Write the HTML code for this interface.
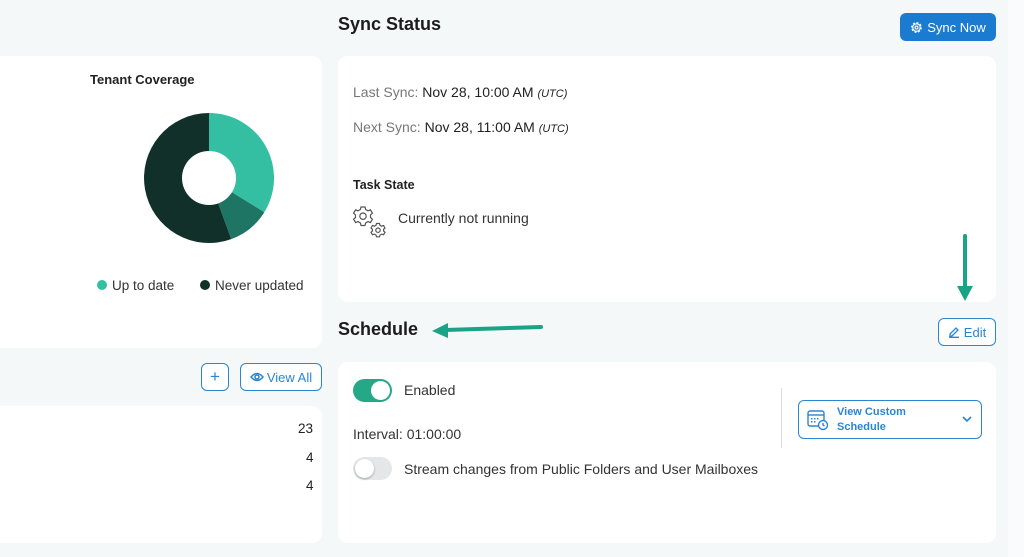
<!DOCTYPE html>
<html><head><meta charset="utf-8"><style>
*{box-sizing:border-box;margin:0;padding:0}
body{width:1024px;height:557px;overflow:hidden;background:#f4f8f9;font-family:"Liberation Sans",sans-serif;color:#222;position:relative}
.card{position:absolute;background:#fff;border-radius:10px}
.abs{position:absolute;white-space:nowrap}
.btn{position:absolute;border:1.5px solid #2a86d3;border-radius:6px;color:#2a86d3;font-size:13px;display:flex;align-items:center;justify-content:center;background:#fff}
.gray{color:#777}
</style></head><body>
<div class="abs" style="left:1008px;top:0;width:16px;height:557px;background:#f9fbfc"></div>
<div class="card" style="left:-10px;top:56px;width:332px;height:292px"></div>
<div class="abs" style="left:90px;top:72px;font-size:13px;font-weight:bold;color:#222">Tenant Coverage</div>
<svg class="abs" style="left:144px;top:113px" width="130" height="130" viewBox="-65 -65 130 130">
<path d="M0,-65 A65,65 0 0 1 55.3,34.2 L0,0Z" fill="#34bfa3"/>
<path d="M55.3,34.2 A65,65 0 0 1 22.2,61.1 L0,0Z" fill="#1e7563"/>
<path d="M22.2,61.1 A65,65 0 1 1 0,-65 L0,0Z" fill="#12302a"/>
<circle r="27" fill="#fff"/></svg>
<div class="abs" style="left:97px;top:278px;font-size:13.5px;color:#333"><span style="display:inline-block;width:10px;height:10px;border-radius:50%;background:#34bfa3;margin-right:5px"></span>Up to date</div>
<div class="abs" style="left:200px;top:278px;font-size:13.5px;color:#333"><span style="display:inline-block;width:10px;height:10px;border-radius:50%;background:#12302a;margin-right:5px"></span>Never updated</div>

<div class="btn" style="left:201px;top:363px;width:28px;height:28px;font-size:17px">+</div>
<div class="btn" style="left:240px;top:363px;width:82px;height:28px"><svg width="14" height="10" viewBox="0 0 14 10" style="margin-right:3px"><path d="M1,5 Q7,-2 13,5 Q7,12 1,5Z" fill="none" stroke="#2a86d3" stroke-width="1.5"/><circle cx="7" cy="5" r="2" fill="none" stroke="#2a86d3" stroke-width="1.5"/></svg>View All</div>
<div class="card" style="left:-10px;top:406px;width:332px;height:137px"></div>
<div class="abs" style="left:298px;top:421px;font-size:13.5px">23</div>
<div class="abs" style="left:306px;top:450px;font-size:13.5px">4</div>
<div class="abs" style="left:306px;top:478px;font-size:13.5px">4</div>

<div class="abs" style="left:338px;top:14px;font-size:18px;font-weight:bold;color:#1c1c1c">Sync Status</div>
<div class="abs" style="left:900px;top:13px;width:96px;height:28px;background:#1a7bd0;border-radius:6px;color:#fff;font-size:13px;display:flex;align-items:center;justify-content:center"><svg width="13" height="13" viewBox="0 0 14 14" style="margin-right:4px"><circle cx="7" cy="7" r="5" fill="none" stroke="#fff" stroke-width="1.6" stroke-dasharray="2.2 1.7"/><circle cx="7" cy="7" r="4" fill="none" stroke="#fff" stroke-width="1.2"/><circle cx="7" cy="7" r="1.6" fill="none" stroke="#fff" stroke-width="1.2"/></svg>Sync Now</div>
<div class="card" style="left:338px;top:56px;width:658px;height:246px"></div>
<div class="abs" style="left:353px;top:84px;font-size:14px"><span class="gray">Last Sync:</span> Nov 28, 10:00 AM <i style="font-size:11px">(UTC)</i></div>
<div class="abs" style="left:353px;top:119px;font-size:14px"><span class="gray">Next Sync:</span> Nov 28, 11:00 AM <i style="font-size:11px">(UTC)</i></div>
<div class="abs" style="left:353px;top:178px;font-size:12.5px;font-weight:bold">Task State</div>
<svg class="abs" style="left:352px;top:205px" width="36" height="34" viewBox="0 0 36 34"><g fill="none" stroke="#555" stroke-width="1.2"><path d="M9,2 L13,2 L13.6,4.5 L16,5.8 L18.4,4.8 L20.4,8.2 L18.5,10 L18.5,12.5 L20.4,14.2 L18.4,17.6 L16,16.6 L13.6,18 L13,20.5 L9,20.5 L8.4,18 L6,16.6 L3.6,17.6 L1.6,14.2 L3.5,12.5 L3.5,10 L1.6,8.2 L3.6,4.8 L6,5.8 L8.4,4.5Z"/><circle cx="11" cy="11.2" r="3.2"/><path d="M24.5,18.5 L27.5,18.5 L28,20.3 L29.7,21.2 L31.5,20.5 L33,23 L31.6,24.3 L31.6,26 L33,27.3 L31.5,29.8 L29.7,29.1 L28,30 L27.5,31.8 L24.5,31.8 L24,30 L22.3,29.1 L20.5,29.8 L19,27.3 L20.4,26 L20.4,24.3 L19,23 L20.5,20.5 L22.3,21.2 L24,20.3Z"/><circle cx="26" cy="25.2" r="2.2"/></g></svg>
<div class="abs" style="left:398px;top:210px;font-size:14px;color:#333">Currently not running</div>
<svg class="abs" style="left:955px;top:233px" width="20" height="70"><line x1="10" y1="3" x2="10" y2="55" stroke="#1aa384" stroke-width="4" stroke-linecap="round"/><path d="M2,53 L18,53 L10,68Z" fill="#1aa384"/></svg>

<div class="abs" style="left:338px;top:319px;font-size:18px;font-weight:bold;color:#1c1c1c">Schedule</div>
<svg class="abs" style="left:430px;top:320px" width="116" height="20"><line x1="15" y1="10" x2="111" y2="7" stroke="#1aa384" stroke-width="4" stroke-linecap="round"/><path d="M2,11 L18,3 L18,18Z" fill="#1aa384"/></svg>
<div class="btn" style="left:938px;top:318px;width:58px;height:28px"><svg width="12" height="12" viewBox="0 0 12 12" style="margin-right:4px"><path d="M2,10 L2,8 L8,2 L10,4 L4,10Z M1,11.3 L11,11.3" fill="none" stroke="#2a86d3" stroke-width="1.3"/></svg>Edit</div>
<div class="card" style="left:338px;top:362px;width:658px;height:181px"></div>
<div class="abs" style="left:353px;top:379px;width:39px;height:23px;border-radius:12px;background:#25a886"><div style="position:absolute;right:2px;top:2px;width:19px;height:19px;border-radius:50%;background:#fff"></div></div>
<div class="abs" style="left:404px;top:382px;font-size:14px;color:#333">Enabled</div>
<div class="abs" style="left:353px;top:426px;font-size:14px;color:#333">Interval: 01:00:00</div>
<div class="abs" style="left:353px;top:457px;width:39px;height:23px;border-radius:12px;background:#e4e6e8"><div style="position:absolute;left:2px;top:2px;width:19px;height:19px;border-radius:50%;background:#fff;box-shadow:0 1px 2px rgba(0,0,0,.3)"></div></div>
<div class="abs" style="left:404px;top:461px;font-size:14px;color:#333">Stream changes from Public Folders and User Mailboxes</div>
<div class="abs" style="left:781px;top:388px;width:1px;height:60px;background:#ddd"></div>
<div class="btn" style="left:798px;top:400px;width:184px;height:39px;justify-content:flex-start;padding-left:8px"><svg width="22" height="22" viewBox="0 0 22 22"><g fill="none" stroke="#2a86d3" stroke-width="1.4"><rect x="1" y="2" width="16" height="15" rx="2"/><line x1="1" y1="6" x2="17" y2="6"/><circle cx="16" cy="16" r="4.5" fill="#fff"/><path d="M16,14 L16,16 L17.5,17"/></g><g fill="#2a86d3"><rect x="4" y="9" width="1.5" height="1.5"/><rect x="7" y="9" width="1.5" height="1.5"/><rect x="10" y="9" width="1.5" height="1.5"/><rect x="4" y="12" width="1.5" height="1.5"/><rect x="7" y="12" width="1.5" height="1.5"/></g></svg><div style="margin-left:8px;font-size:11px;font-weight:bold;line-height:15px">View Custom<br>Schedule</div><svg style="position:absolute;right:9px;top:15px" width="10" height="7"><path d="M1,1 L5,5 L9,1" fill="none" stroke="#2a86d3" stroke-width="1.6"/></svg></div>
</body></html>
